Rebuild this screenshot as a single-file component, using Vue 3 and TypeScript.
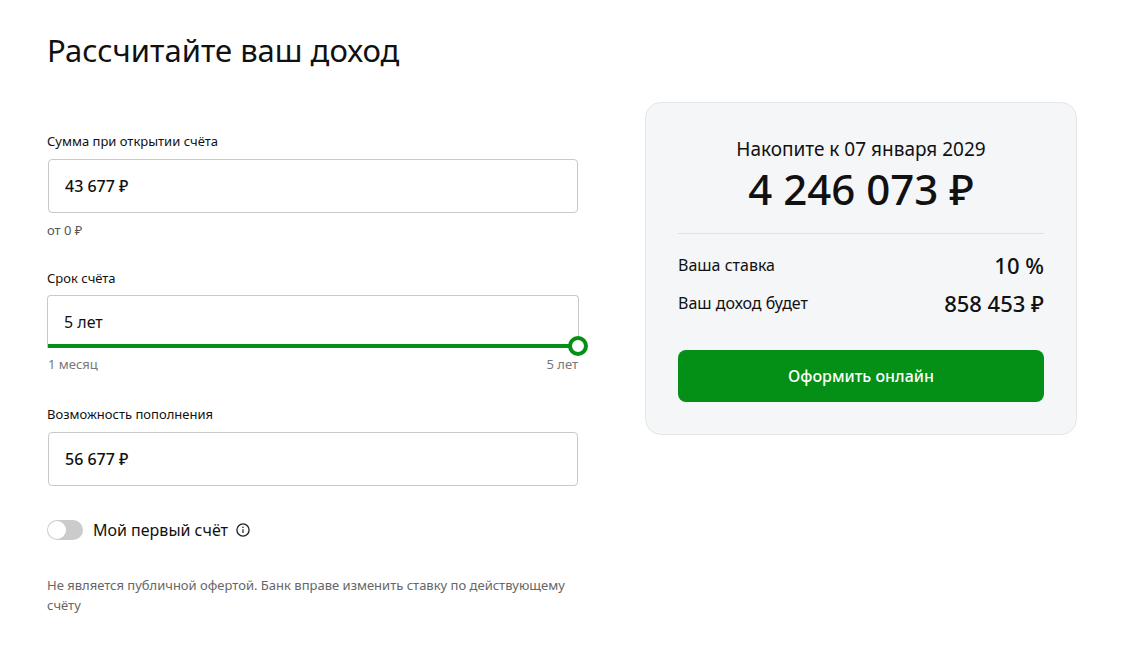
<script setup lang="ts">
import { computed, ref } from 'vue'

const amount = ref('43 677 ₽')
const topUp = ref('56 677 ₽')
const months = ref(60)
const firstAccount = ref(false)

const MIN_MONTHS = 1
const MAX_MONTHS = 60

const filled = computed(() => ((months.value - MIN_MONTHS) / (MAX_MONTHS - MIN_MONTHS)) * 100)
const term = computed(() => (months.value === MAX_MONTHS ? '5 лет' : `${months.value} мес.`))

const results = [
  { name: 'Ваша ставка', value: '10 %' },
  { name: 'Ваш доход будет', value: '858 453 ₽' },
]
</script>

<template>
  <main class="page">
    <h1 class="title">Рассчитайте ваш доход</h1>
    <div class="calculator">
      <form class="form" @submit.prevent>
        <div class="field">
          <label class="label" for="amount">Сумма при открытии счёта</label>
          <input id="amount" v-model="amount" class="box" type="text" />
          <p class="hint hint-min">от 0 ₽</p>
        </div>

        <div class="field">
          <label class="label label-term" for="term">Срок счёта</label>
          <div class="term">
            <input id="term" class="term-value" type="text" :value="term" readonly />
            <div class="track"><div class="track-fill" :style="{ width: filled + '%' }"></div></div>
            <input
              v-model.number="months"
              class="range"
              type="range"
              :min="MIN_MONTHS"
              :max="MAX_MONTHS"
              aria-label="Срок счёта"
            />
          </div>
          <div class="hint limits"><span>1 месяц</span><span>5 лет</span></div>
        </div>

        <div class="field">
          <label class="label" for="topup">Возможность пополнения</label>
          <input id="topup" v-model="topUp" class="box" type="text" />
        </div>

        <div class="first">
          <label class="switch">
            <input v-model="firstAccount" class="switch-input" type="checkbox" role="switch" />
            <span>Мой первый счёт</span>
          </label>
          <button class="info" type="button" aria-label="Подробнее">
            <svg width="14" height="14" viewBox="0 0 14 14" fill="none" aria-hidden="true">
              <circle cx="7" cy="7" r="6.1" stroke="#1f1f22" stroke-width="1.3" />
              <circle cx="7" cy="4.3" r="0.8" fill="#1f1f22" />
              <path d="M7 6.2V10" stroke="#1f1f22" stroke-width="1.2" />
            </svg>
          </button>
        </div>

        <p class="disclaimer">
          Не является публичной офертой. Банк вправе изменить ставку по действующему счёту
        </p>
      </form>

      <section class="card">
        <p class="card-caption">Накопите к 07 января 2029</p>
        <p class="card-total">4 246 073 ₽</p>
        <dl class="results">
          <div v-for="row in results" :key="row.name" class="result">
            <dt>{{ row.name }}</dt>
            <dd>{{ row.value }}</dd>
          </div>
        </dl>
        <button class="submit" type="button">Оформить онлайн</button>
      </section>
    </div>
  </main>
</template>

<style>
body {
  margin: 0;
  background: #fff;
}
</style>

<style scoped>
.page {
  box-sizing: border-box;
  padding: 30px 63px 48px 47px;
  font-family: 'Noto Sans', 'Open Sans', sans-serif;
  color: #111;
}
.page * {
  box-sizing: border-box;
}
p,
dl,
dd {
  margin: 0;
}
input,
button {
  margin: 0;
  font-family: inherit;
  color: inherit;
}
.title {
  margin: 0 0 32px;
  font-size: 31px;
  line-height: 40px;
  font-weight: 400;
}
.calculator {
  display: grid;
  grid-template-columns: minmax(0, 1fr) 432px;
  column-gap: 66px;
  align-items: start;
}
.form {
  padding-top: 29px;
}
.field {
  display: flex;
  flex-direction: column;
  margin-bottom: 28px;
}
.label {
  margin-bottom: 8px;
  font-size: 13px;
  line-height: 20px;
}
.label-term {
  margin-bottom: 7px;
}
.box {
  height: 54px;
  margin: 0 1px;
  padding: 0 16px;
  border: 1px solid #c9c9c9;
  border-radius: 4px;
  background: #fff;
  font-size: 16px;
  font-weight: 500;
}
.hint {
  margin-top: 7px;
  font-size: 13px;
  line-height: 20px;
  color: #777;
}
.hint-min {
  color: #555;
}
.term {
  position: relative;
}
.term-value {
  display: block;
  width: 100%;
  height: 53px;
  padding: 0 16px;
  border: 1px solid #c9c9c9;
  border-bottom: 0;
  border-radius: 4px 4px 0 0;
  background: #fff;
  font-size: 16px;
}
.track {
  position: absolute;
  left: 1px;
  right: 1px;
  bottom: 0;
  height: 4px;
  background: #d0d0d0;
}
.track-fill {
  height: 100%;
  background: #048f16;
}
.range {
  position: absolute;
  left: -9px;
  bottom: -8px;
  width: calc(100% + 18px);
  height: 20px;
  appearance: none;
  background: transparent;
  cursor: pointer;
}
.range::-webkit-slider-thumb {
  appearance: none;
  box-sizing: border-box;
  width: 20px;
  height: 20px;
  border: 4px solid #048f16;
  border-radius: 50%;
  background: #fff;
}
.limits {
  display: flex;
  justify-content: space-between;
  margin-top: 6px;
  padding: 0 1px 2px;
}
.first {
  display: flex;
  align-items: center;
  gap: 8px;
  margin-top: 32px;
  height: 24px;
}
.switch {
  display: flex;
  align-items: center;
  gap: 10px;
  font-size: 16px;
  line-height: 24px;
}
.switch-input {
  appearance: none;
  width: 36px;
  height: 20px;
  padding: 1px;
  border-radius: 10px;
  background: #cbcbcb;
}
.switch-input::before {
  content: '';
  display: block;
  width: 18px;
  height: 18px;
  border-radius: 50%;
  background: #fff;
}
.switch-input:checked {
  background: #048f16;
}
.switch-input:checked::before {
  margin-left: 16px;
}
.info {
  display: flex;
  padding: 0;
  border: 0;
  background: none;
}
.disclaimer {
  margin-top: 33px;
  font-size: 13px;
  line-height: 20px;
  color: #666;
}
.card {
  padding: 32px;
  border: 1px solid #e3e5e6;
  border-radius: 16px;
  background: #f4f6f8;
}
.card-caption {
  font-size: 19px;
  line-height: 28px;
  text-align: center;
}
.card-total {
  padding-bottom: 18px;
  border-bottom: 1px solid #dfe1e4;
  font-size: 42px;
  line-height: 52px;
  font-weight: 500;
  text-align: center;
}
.results {
  padding: 12px 0 28px;
}
.result {
  display: flex;
  align-items: center;
  justify-content: space-between;
  height: 38px;
}
.result dt {
  font-size: 16px;
}
.result dd {
  font-size: 22px;
  font-weight: 500;
}
.submit {
  display: block;
  width: 100%;
  height: 52px;
  border: 0;
  border-radius: 8px;
  background: #048f16;
  color: #fff;
  font-size: 16px;
  font-weight: 500;
}
</style>
